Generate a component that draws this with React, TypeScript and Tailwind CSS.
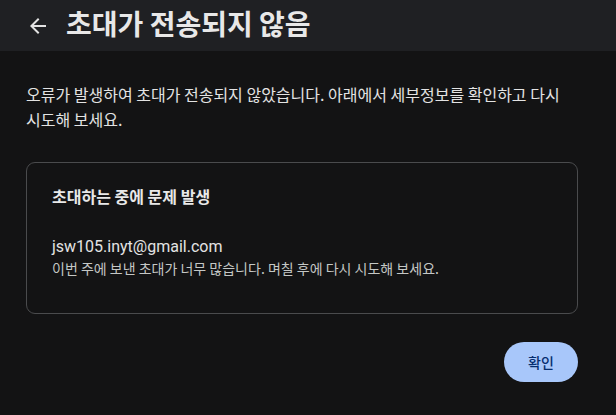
import React from "react";

export default function App() {
  return (
    <div
      className="w-[616px] h-[415px] bg-[#131314] text-[#e3e3e3] flex flex-col overflow-hidden"
      style={{ fontFamily: '"Noto Sans CJK KR", "Noto Sans", Roboto, sans-serif' }}
    >
      <div className="h-[51px] bg-[#1f2023] flex items-center pl-[26px] shrink-0">
        <svg width="24" height="24" viewBox="0 0 24 24" className="text-[#e3e3e3]">
          <path d="M20 11H7.83l5.59-5.59L12 4l-8 8 8 8 1.41-1.41L7.83 13H20v-2z" fill="currentColor" />
        </svg>
        <h1 className="ml-[16px] text-[28px] font-bold leading-none text-[#e8e8e8] -mt-[6px]">초대가 전송되지 않음</h1>
      </div>
      <div className="pl-[26px] pr-[38px] pt-[31px] flex flex-col">
        <p className="text-[16px] leading-[25px] text-[#e3e3e3] pr-[10px]">
          오류가 발생하여 초대가 전송되지 않았습니다. 아래에서 세부정보를 확인하고 다시 시도해 보세요.
        </p>
        <div className="mt-[30px] h-[152px] border border-[#4a4b4d] rounded-[9px] px-[25px] pt-[22px]">
          <div className="text-[16px] font-bold leading-[22px] text-[#e8e8e8]">초대하는 중에 문제 발생</div>
          <div className="mt-[29px] text-[16px] leading-[22px] text-[#e3e3e3]" style={{ fontFamily: 'Roboto, "Noto Sans CJK KR", sans-serif' }}>
            jsw105.inyt@gmail.com
          </div>
          <div className="text-[14px] leading-[21px] text-[#c4c7c5]">
            이번 주에 보낸 초대가 너무 많습니다. 며칠 후에 다시 시도해 보세요.
          </div>
        </div>
        <div className="flex justify-end mt-[28px]">
          <button className="w-[74px] h-[40px] rounded-full bg-[#a8c7fa] text-[#062e6f] text-[14px] font-medium">
            확인
          </button>
        </div>
      </div>
    </div>
  );
}
